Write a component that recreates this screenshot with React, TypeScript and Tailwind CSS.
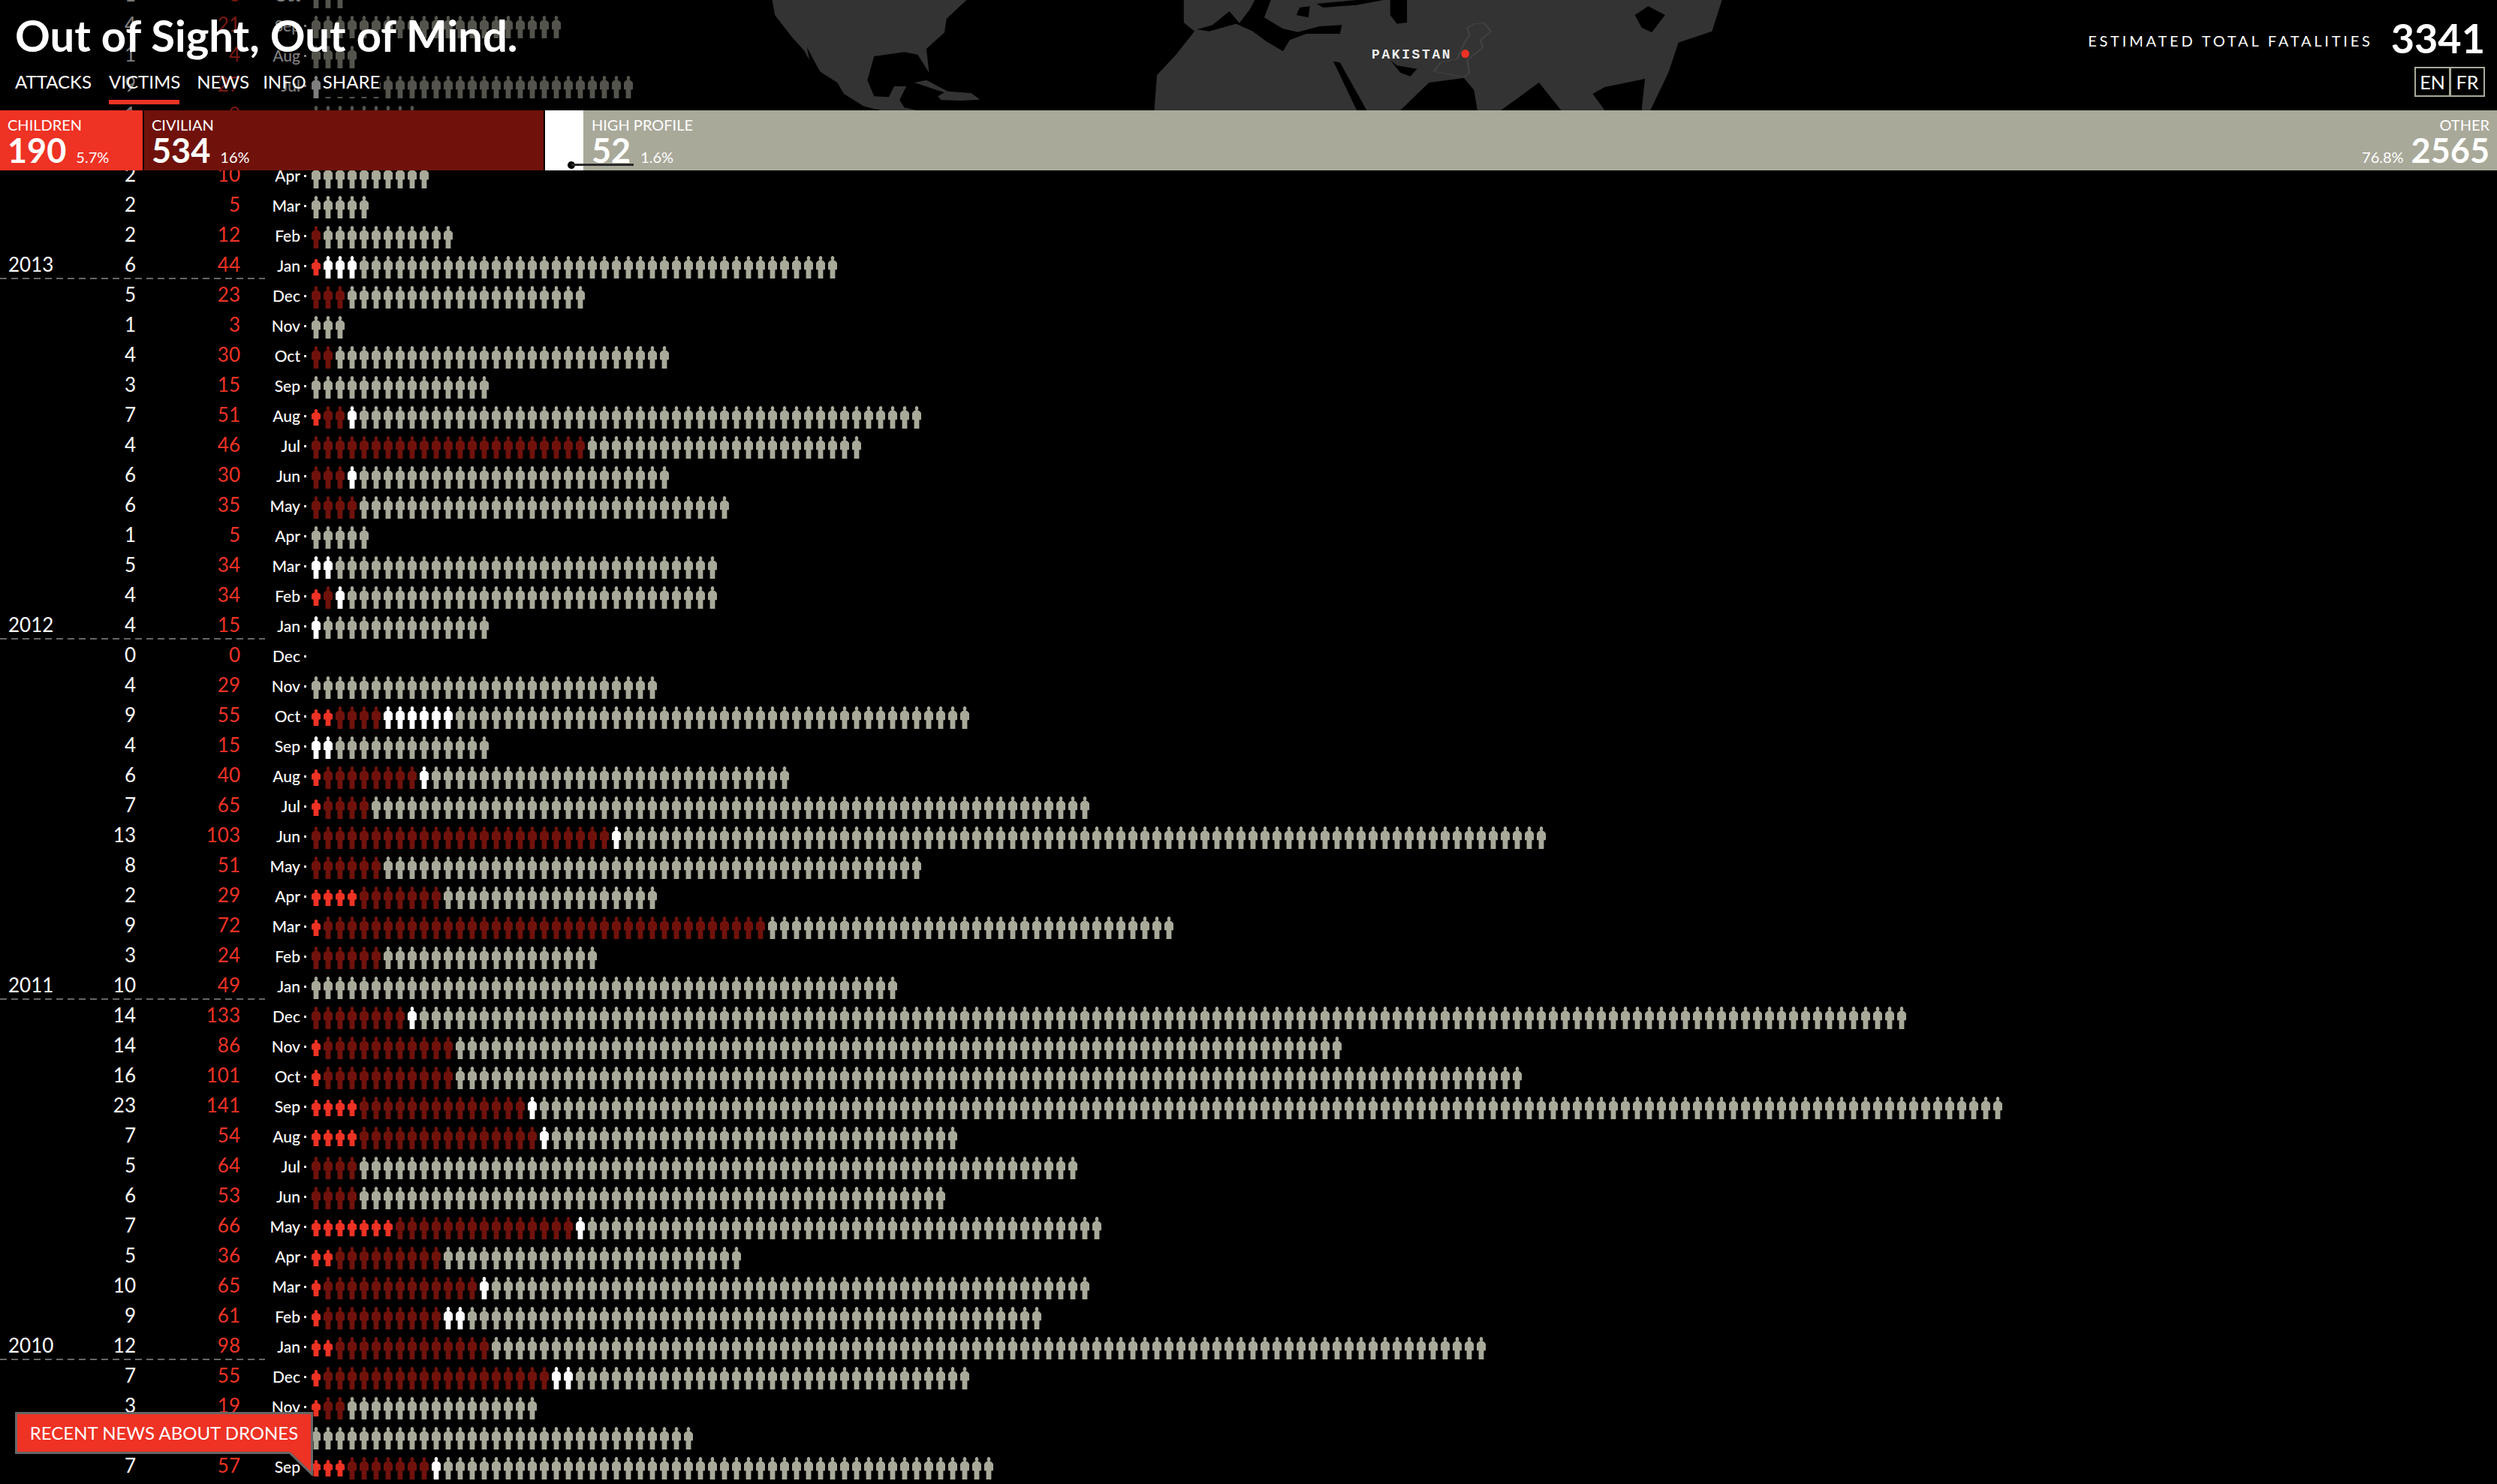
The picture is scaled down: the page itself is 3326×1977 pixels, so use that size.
const RED = "#ee3224";
const DARK = "#70120b";
const GREY = "#a9a99a";

type Row = [string, number, number, string, number, number, number];

// year, attacks, total, month, children, civilian, high profile
const rows: Row[] = [
  ["", 1, 3, "Oct", 0, 0, 0],
  ["", 4, 21, "Sep", 0, 0, 0],
  ["", 1, 4, "Aug", 0, 0, 0],
  ["", 9, 27, "Jul", 0, 0, 1],
  ["", 1, 9, "Jun", 0, 0, 0],
  ["", 1, 4, "May", 0, 0, 0],
  ["", 2, 10, "Apr", 0, 0, 0],
  ["", 2, 5, "Mar", 0, 0, 0],
  ["", 2, 12, "Feb", 0, 1, 0],
  ["2013", 6, 44, "Jan", 1, 0, 3],
  ["", 5, 23, "Dec", 0, 3, 0],
  ["", 1, 3, "Nov", 0, 0, 0],
  ["", 4, 30, "Oct", 0, 2, 0],
  ["", 3, 15, "Sep", 0, 0, 0],
  ["", 7, 51, "Aug", 1, 2, 1],
  ["", 4, 46, "Jul", 0, 23, 0],
  ["", 6, 30, "Jun", 0, 3, 1],
  ["", 6, 35, "May", 0, 4, 0],
  ["", 1, 5, "Apr", 0, 0, 0],
  ["", 5, 34, "Mar", 0, 0, 2],
  ["", 4, 34, "Feb", 1, 1, 1],
  ["2012", 4, 15, "Jan", 0, 0, 1],
  ["", 0, 0, "Dec", 0, 0, 0],
  ["", 4, 29, "Nov", 0, 0, 0],
  ["", 9, 55, "Oct", 2, 4, 6],
  ["", 4, 15, "Sep", 0, 0, 2],
  ["", 6, 40, "Aug", 1, 8, 1],
  ["", 7, 65, "Jul", 1, 4, 0],
  ["", 13, 103, "Jun", 0, 25, 1],
  ["", 8, 51, "May", 0, 6, 0],
  ["", 2, 29, "Apr", 4, 7, 0],
  ["", 9, 72, "Mar", 1, 37, 0],
  ["", 3, 24, "Feb", 0, 6, 0],
  ["2011", 10, 49, "Jan", 0, 0, 0],
  ["", 14, 133, "Dec", 0, 8, 1],
  ["", 14, 86, "Nov", 1, 11, 0],
  ["", 16, 101, "Oct", 1, 11, 0],
  ["", 23, 141, "Sep", 4, 14, 1],
  ["", 7, 54, "Aug", 4, 15, 1],
  ["", 5, 64, "Jul", 0, 4, 0],
  ["", 6, 53, "Jun", 0, 4, 0],
  ["", 7, 66, "May", 7, 15, 1],
  ["", 5, 36, "Apr", 2, 9, 0],
  ["", 10, 65, "Mar", 1, 13, 1],
  ["", 9, 61, "Feb", 1, 10, 2],
  ["2010", 12, 98, "Jan", 2, 13, 0],
  ["", 7, 55, "Dec", 1, 19, 2],
  ["", 3, 19, "Nov", 1, 2, 0],
  ["", 4, 32, "Oct", 0, 0, 0],
  ["", 7, 57, "Sep", 3, 7, 1],
];

const personPath =
  "M6 0C7.4 0 8.3 1.4 8.3 3C8.3 4.3 7.9 5 7.4 5.6L10 6.8L12 9.2L12 18L9.4 18.6L9.4 30L2.6 30L2.6 18.6L0 18L0 9.2L2 6.8L4.6 5.6C4.1 5 3.7 4.3 3.7 3C3.7 1.4 4.6 0 6 0Z";

function Person({ color, child }: { color: string; child?: boolean }) {
  return (
    <span className="flex h-[30px] w-4 shrink-0 items-start justify-center">
      <svg
        viewBox="0 0 12 30"
        preserveAspectRatio="none"
        className={child ? "mt-[4px] h-[22px] w-[12px]" : "h-[30px] w-[12px]"}
      >
        <path d={personPath} fill={color} />
      </svg>
    </span>
  );
}

function RowLine({ row }: { row: Row }) {
  const [year, attacks, total, month, ch, civ, hp] = row;
  const figures = [];
  for (let i = 0; i < total; i++) {
    if (i < ch) figures.push(<Person key={i} color={RED} child />);
    else if (i < ch + civ) figures.push(<Person key={i} color={DARK} />);
    else if (i < ch + civ + hp) figures.push(<Person key={i} color="#ffffff" />);
    else figures.push(<Person key={i} color={GREY} />);
  }
  return (
    <div className="relative flex h-10 items-center pl-[11px]">
      <span className="-mt-[9px] w-[110px] text-[26px] leading-none text-white">{year}</span>
      <span className="-mt-[9px] w-[60px] text-right text-[26px] leading-none text-white">{attacks}</span>
      <span className="-mt-[9px] w-[139px] text-right text-[26px] leading-none text-[#ee3224]">{total}</span>
      <span className="-mt-[6px] w-[80px] text-right text-[21px] font-medium leading-none text-white">{month}</span>
      <span className="-mt-[4px] ml-[5px] h-[3px] w-[3px] bg-white" />
      <div className="ml-[5px] flex blur-[0.5px]">{figures}</div>
      {year && (
        <div className="absolute left-0 top-[34px] h-[2px] w-[353px] bg-[repeating-linear-gradient(90deg,#666_0,#666_9px,transparent_9px,transparent_15px)]" />
      )}
    </div>
  );
}

function WorldMap() {
  return (
    <svg
      viewBox="0 0 1568 441"
      preserveAspectRatio="none"
      className="absolute left-[950px] top-0 h-[147px] w-[1400px]"
    >
      <path
        fill="#333333"
        d="M88 0L92 60L118 150L135 200L150 270L185 330L195 375L225 425L250 441L305 441L285 430L278 400L288 345L270 345L262 388L240 385L230 320L240 225L285 208L305 218L322 290L318 195L345 130L348 75L378 0Z"
      />
      <path fill="#000000" d="M140 190L155 265L168 325L160 310L145 260Z" />
      <path fill="#333333" d="M300 330L318 320L350 365L385 372L398 398L370 402L340 400L335 385L345 370Z" />
      <path
        fill="#333333"
        d="M702 0L702 90L718 125L690 220L662 300L658 441L1025 441L1060 350L1068 330L1120 312L1135 360L1140 441L1175 441L1232 330L1265 441L1330 441L1312 375L1330 348L1390 315L1385 441L1398 441L1425 290L1440 170L1490 125L1505 0Z"
      />
      <path
        fill="#000000"
        d="M722 118L745 100L770 45L785 92L800 40L808 0L832 0L822 70L850 115L872 128L905 105L938 100L935 135L885 135L860 160L850 205L825 165L805 125L780 95L740 125Z"
      />
      <path fill="#000000" d="M875 30L890 25L888 70L870 60Z" />
      <path fill="#000000" d="M900 15L960 0L1000 0L960 20L910 30Z" />
      <path fill="#000000" d="M1010 0L1035 0L1035 90L1020 95L1010 60Z" />
      <path fill="#000000" d="M925 245L935 250L975 441L960 441Z" />
      <path fill="#000000" d="M1010 240L1020 262L1050 275L1040 305L1025 290Z" />
      <path fill="#000000" d="M1375 60L1395 25L1420 60L1400 130L1385 110Z" />
      <path
        fill="none"
        stroke="#414141"
        strokeWidth="3"
        d="M1135 95L1150 92L1160 125L1145 160L1148 190L1125 240L1128 290L1120 308L1075 285L1085 250L1110 235L1120 175L1128 140L1125 110Z"
      />
      <ellipse cx="1122" cy="215" rx="6" ry="17" fill="#ee3224" />
    </svg>
  );
}

function Header() {
  return (
    <header className="absolute inset-x-0 top-0">
      <div className="relative flex h-[147px] justify-between bg-black/50">
        <WorldMap />
        <span className="absolute left-[1827px] top-[64px] font-['Liberation_Mono',monospace] text-[18px] font-bold leading-none tracking-[2.6px] text-[#eeeeee]">
          PAKISTAN
        </span>
        <div className="relative pl-[20px]">
          <h1 className="mt-[18px] text-[58px] font-bold leading-none text-white">Out of Sight, Out of Mind.</h1>
          <nav className="mt-[21px] flex text-[24px] leading-none text-white">
            <a className="mr-[23px]">ATTACKS</a>
            <a className="relative mr-[22px]">
              VICTIMS
              <span className="absolute -bottom-[10px] left-0 h-[6px] w-[94px] bg-[#ee3224]" />
            </a>
            <a className="mr-[18px]">NEWS</a>
            <a className="mr-[22px]">INFO</a>
            <a className="bg-black pb-[8px]">SHARE</a>
          </nav>
        </div>
        <div className="relative flex flex-col items-end pr-[16px]">
          <div className="mt-[24px] flex items-center">
            <span className="mr-[24px] mt-[6px] text-[20px] leading-none tracking-[0.19em] text-white">
              ESTIMATED TOTAL FATALITIES
            </span>
            <span className="text-[54px] font-bold leading-none text-white">3341</span>
          </div>
          <div className="mt-[11px] flex h-[40px] w-[94px] border-2 border-[#a9a99a] text-[25px] leading-none text-white">
            <span className="flex w-[47px] items-center justify-center border-r-[3px] border-[#a9a99a]">EN</span>
            <span className="flex flex-1 items-center justify-center">FR</span>
          </div>
        </div>
      </div>
      <div className="flex h-20 bg-black text-white">
        <Stat className="w-[190px] bg-[#ee3224] pl-[10px]" label="CHILDREN" num="190" pct="5.7%" />
        <Stat className="ml-[2px] w-[532px] bg-[#70120b] pl-[10px]" label="CIVILIAN" num="534" pct="16%" />
        <div className="relative ml-[2px] w-[51px] bg-white" />
        <div className="relative flex flex-1 justify-between bg-[#a9a99a]">
          <Stat className="pl-[11px]" label="HIGH PROFILE" num="52" pct="1.6%" />
          <div className="flex flex-col items-end pr-[10px] pt-[7px]">
            <span className="text-[20px] leading-[24px]">OTHER</span>
            <div className="flex items-baseline">
              <span className="mr-[10px] text-[20px] leading-none">76.8%</span>
              <span className="text-[45px] font-bold leading-[44px]">2565</span>
            </div>
          </div>
        </div>
      </div>
      <div className="absolute left-[756px] top-[215px] h-[10px] w-[10px] rounded-full bg-black" />
      <div className="absolute left-[761px] top-[218px] h-[3px] w-[83px] bg-[#2a2a2a]" />
    </header>
  );
}

function Stat({ className, label, num, pct }: { className: string; label: string; num: string; pct: string }) {
  return (
    <div className={`flex flex-col pt-[7px] ${className}`}>
      <span className="text-[20px] leading-[24px]">{label}</span>
      <div className="flex items-baseline">
        <span className="text-[45px] font-bold leading-[44px]">{num}</span>
        <span className="ml-[13px] text-[20px] leading-none">{pct}</span>
      </div>
    </div>
  );
}

function Callout() {
  return (
    <div className="absolute left-[20px] top-[1881px]">
      <div className="flex h-[56px] w-[397px] items-center justify-center border-[3px] border-[#666666] bg-[#ee3224] text-[24px] leading-none text-white">
        RECENT NEWS ABOUT DRONES
      </div>
      <svg className="absolute left-[365px] top-[53px] h-[32px] w-[32px]" viewBox="0 0 32 32">
        <path d="M0 0L32 0L32 31Z" fill="#ee3224" />
        <path d="M1 1.5L30.5 30L30.5 0" fill="none" stroke="#666666" strokeWidth="3" />
      </svg>
    </div>
  );
}

export default function App() {
  return (
    <div className="relative h-[1977px] overflow-hidden bg-black font-[Lato,sans-serif]">
      <div className="-mt-[24px]">
        {rows.map((r, i) => (
          <RowLine key={i} row={r} />
        ))}
      </div>
      <Header />
      <Callout />
    </div>
  );
}
